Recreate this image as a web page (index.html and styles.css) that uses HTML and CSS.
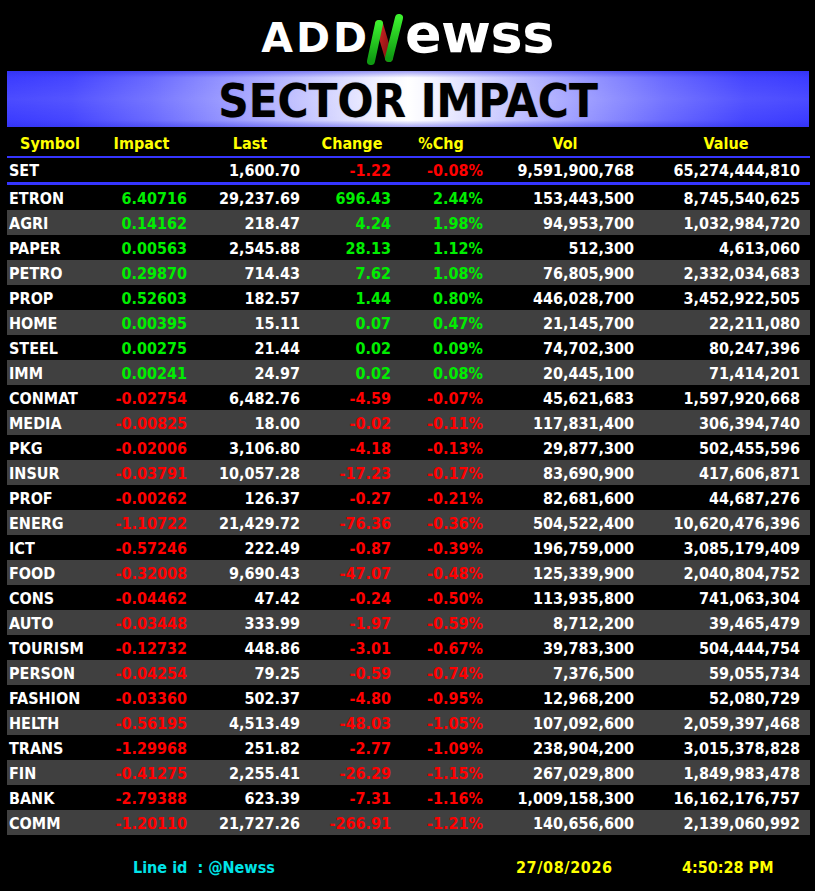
FILE: index.html
```html
<!DOCTYPE html>
<html>
<head>
<meta charset="utf-8">
<link rel="stylesheet" href="styles.css">
</head>
<body>
<div class="page">
  <div class="logo">
    <span class="logo-caps">ADD</span>
    <svg class="logo-n" width="42" height="54" viewBox="0 0 42 54">
      <defs>
        <linearGradient id="gl" x1="0" y1="0" x2="0" y2="1">
          <stop offset="0" stop-color="#3bef2e"/>
          <stop offset="1" stop-color="#0f9a12"/>
        </linearGradient>
        <linearGradient id="rd" x1="0" y1="0" x2="1" y2="1">
          <stop offset="0" stop-color="#d42424"/>
          <stop offset="1" stop-color="#7e1010"/>
        </linearGradient>
      </defs>
      <path d="M17 12 L27 46" stroke="url(#rd)" stroke-width="8" stroke-linecap="round" fill="none"/>
      <path d="M9 49 L17 12" stroke="url(#gl)" stroke-width="8" stroke-linecap="round" fill="none"/>
      <path d="M27 46 L37 6" stroke="url(#gl)" stroke-width="8" stroke-linecap="round" fill="none"/>
    </svg>
    <span class="logo-low">ewss</span>
  </div>

  <div class="banner">SECTOR IMPACT</div>

  <div class="grid hrow">
    <div>Symbol</div><div>Impact</div><div>Last</div><div>Change</div><div>%Chg</div><div>Vol</div><div>Value</div>
  </div>
  <div class="rule thin"></div>
  <div class="grid setrow">
    <div class="sym">SET</div><div class="num"></div><div class="num">1,600.70</div><div class="num neg">-1.22</div><div class="num neg">-0.08%</div><div class="num">9,591,900,768</div><div class="num">65,274,444,810</div>
  </div>
  <div class="rule thick"></div>

  <div class="rows">
    <div class="grid drow"><div class="sym">ETRON</div><div class="num pos">6.40716</div><div class="num">29,237.69</div><div class="num pos">696.43</div><div class="num pos">2.44%</div><div class="num">153,443,500</div><div class="num">8,745,540,625</div></div>
    <div class="grid drow"><div class="sym">AGRI</div><div class="num pos">0.14162</div><div class="num">218.47</div><div class="num pos">4.24</div><div class="num pos">1.98%</div><div class="num">94,953,700</div><div class="num">1,032,984,720</div></div>
    <div class="grid drow"><div class="sym">PAPER</div><div class="num pos">0.00563</div><div class="num">2,545.88</div><div class="num pos">28.13</div><div class="num pos">1.12%</div><div class="num">512,300</div><div class="num">4,613,060</div></div>
    <div class="grid drow"><div class="sym">PETRO</div><div class="num pos">0.29870</div><div class="num">714.43</div><div class="num pos">7.62</div><div class="num pos">1.08%</div><div class="num">76,805,900</div><div class="num">2,332,034,683</div></div>
    <div class="grid drow"><div class="sym">PROP</div><div class="num pos">0.52603</div><div class="num">182.57</div><div class="num pos">1.44</div><div class="num pos">0.80%</div><div class="num">446,028,700</div><div class="num">3,452,922,505</div></div>
    <div class="grid drow"><div class="sym">HOME</div><div class="num pos">0.00395</div><div class="num">15.11</div><div class="num pos">0.07</div><div class="num pos">0.47%</div><div class="num">21,145,700</div><div class="num">22,211,080</div></div>
    <div class="grid drow"><div class="sym">STEEL</div><div class="num pos">0.00275</div><div class="num">21.44</div><div class="num pos">0.02</div><div class="num pos">0.09%</div><div class="num">74,702,300</div><div class="num">80,247,396</div></div>
    <div class="grid drow"><div class="sym">IMM</div><div class="num pos">0.00241</div><div class="num">24.97</div><div class="num pos">0.02</div><div class="num pos">0.08%</div><div class="num">20,445,100</div><div class="num">71,414,201</div></div>
    <div class="grid drow"><div class="sym">CONMAT</div><div class="num neg">-0.02754</div><div class="num">6,482.76</div><div class="num neg">-4.59</div><div class="num neg">-0.07%</div><div class="num">45,621,683</div><div class="num">1,597,920,668</div></div>
    <div class="grid drow"><div class="sym">MEDIA</div><div class="num neg">-0.00825</div><div class="num">18.00</div><div class="num neg">-0.02</div><div class="num neg">-0.11%</div><div class="num">117,831,400</div><div class="num">306,394,740</div></div>
    <div class="grid drow"><div class="sym">PKG</div><div class="num neg">-0.02006</div><div class="num">3,106.80</div><div class="num neg">-4.18</div><div class="num neg">-0.13%</div><div class="num">29,877,300</div><div class="num">502,455,596</div></div>
    <div class="grid drow"><div class="sym">INSUR</div><div class="num neg">-0.03791</div><div class="num">10,057.28</div><div class="num neg">-17.23</div><div class="num neg">-0.17%</div><div class="num">83,690,900</div><div class="num">417,606,871</div></div>
    <div class="grid drow"><div class="sym">PROF</div><div class="num neg">-0.00262</div><div class="num">126.37</div><div class="num neg">-0.27</div><div class="num neg">-0.21%</div><div class="num">82,681,600</div><div class="num">44,687,276</div></div>
    <div class="grid drow"><div class="sym">ENERG</div><div class="num neg">-1.10722</div><div class="num">21,429.72</div><div class="num neg">-76.36</div><div class="num neg">-0.36%</div><div class="num">504,522,400</div><div class="num">10,620,476,396</div></div>
    <div class="grid drow"><div class="sym">ICT</div><div class="num neg">-0.57246</div><div class="num">222.49</div><div class="num neg">-0.87</div><div class="num neg">-0.39%</div><div class="num">196,759,000</div><div class="num">3,085,179,409</div></div>
    <div class="grid drow"><div class="sym">FOOD</div><div class="num neg">-0.32008</div><div class="num">9,690.43</div><div class="num neg">-47.07</div><div class="num neg">-0.48%</div><div class="num">125,339,900</div><div class="num">2,040,804,752</div></div>
    <div class="grid drow"><div class="sym">CONS</div><div class="num neg">-0.04462</div><div class="num">47.42</div><div class="num neg">-0.24</div><div class="num neg">-0.50%</div><div class="num">113,935,800</div><div class="num">741,063,304</div></div>
    <div class="grid drow"><div class="sym">AUTO</div><div class="num neg">-0.03448</div><div class="num">333.99</div><div class="num neg">-1.97</div><div class="num neg">-0.59%</div><div class="num">8,712,200</div><div class="num">39,465,479</div></div>
    <div class="grid drow"><div class="sym">TOURISM</div><div class="num neg">-0.12732</div><div class="num">448.86</div><div class="num neg">-3.01</div><div class="num neg">-0.67%</div><div class="num">39,783,300</div><div class="num">504,444,754</div></div>
    <div class="grid drow"><div class="sym">PERSON</div><div class="num neg">-0.04254</div><div class="num">79.25</div><div class="num neg">-0.59</div><div class="num neg">-0.74%</div><div class="num">7,376,500</div><div class="num">59,055,734</div></div>
    <div class="grid drow"><div class="sym">FASHION</div><div class="num neg">-0.03360</div><div class="num">502.37</div><div class="num neg">-4.80</div><div class="num neg">-0.95%</div><div class="num">12,968,200</div><div class="num">52,080,729</div></div>
    <div class="grid drow"><div class="sym">HELTH</div><div class="num neg">-0.56195</div><div class="num">4,513.49</div><div class="num neg">-48.03</div><div class="num neg">-1.05%</div><div class="num">107,092,600</div><div class="num">2,059,397,468</div></div>
    <div class="grid drow"><div class="sym">TRANS</div><div class="num neg">-1.29968</div><div class="num">251.82</div><div class="num neg">-2.77</div><div class="num neg">-1.09%</div><div class="num">238,904,200</div><div class="num">3,015,378,828</div></div>
    <div class="grid drow"><div class="sym">FIN</div><div class="num neg">-0.41275</div><div class="num">2,255.41</div><div class="num neg">-26.29</div><div class="num neg">-1.15%</div><div class="num">267,029,800</div><div class="num">1,849,983,478</div></div>
    <div class="grid drow"><div class="sym">BANK</div><div class="num neg">-2.79388</div><div class="num">623.39</div><div class="num neg">-7.31</div><div class="num neg">-1.16%</div><div class="num">1,009,158,300</div><div class="num">16,162,176,757</div></div>
    <div class="grid drow"><div class="sym">COMM</div><div class="num neg">-1.20110</div><div class="num">21,727.26</div><div class="num neg">-266.91</div><div class="num neg">-1.21%</div><div class="num">140,656,600</div><div class="num">2,139,060,992</div></div>
  </div>

  <div class="footer">
    <span class="line-id">Line id  : @Newss</span>
    <span class="date">27/08/2026</span>
    <span class="time">4:50:28 PM</span>
  </div>
</div>
</body>
</html>
```

FILE: styles.css
```css
html, body {
  margin: 0;
  padding: 0;
  background: #000;
}
.page {
  width: 815px;
  height: 891px;
  background: #000;
  font-family: "DejaVu Sans Condensed", "DejaVu Sans", sans-serif;
  font-stretch: condensed;
  font-weight: bold;
  font-size: 16px;
  color: #fff;
  overflow: hidden;
}
.logo {
  height: 71px;
  box-sizing: border-box;
  padding-top: 7px;
  display: flex;
  align-items: baseline;
  justify-content: center;
  font-family: "DejaVu Sans", sans-serif;
  font-stretch: normal;
  color: #fff;
}
.logo-caps {
  font-size: 41px;
  line-height: 41px;
  letter-spacing: 3px;
}
.logo-n {
  align-self: center;
  margin-left: -8px;
  margin-right: 1px;
}
.logo-low {
  font-size: 54px;
  line-height: 54px;
  letter-spacing: -0.5px;
}
.banner {
  margin: 0 6px 0 7px;
  height: 56px;
  box-sizing: border-box;
  padding-top: 3px;
  line-height: 53px;
  text-align: center;
  font-size: 47px;
  color: #000;
  background-color: #3f3fff;
  background-image:
    linear-gradient(180deg, rgba(40, 40, 230, 0.45) 0%, rgba(40, 40, 230, 0) 12%, rgba(255, 255, 255, 0.08) 50%, rgba(40, 40, 230, 0) 88%, rgba(40, 40, 230, 0.4) 100%),
    linear-gradient(90deg, #3c3cff 0%, #4646ff 8%, #6a6aff 18%, #9494ff 27%, #c8c8ff 38%, #f4f4ff 47%, #ffffff 50%, #f4f4ff 53%, #c8c8ff 62%, #9494ff 73%, #6a6aff 82%, #4646ff 92%, #3c3cff 100%);
  text-shadow: 0 0 1px rgba(60, 60, 60, 0.6);
}
.grid {
  display: grid;
  grid-template-columns: 86px 97px 120px 84px 94px 154px 168px;
  margin-left: 7px;
  width: 803px;
}
.hrow {
  height: 29px;
  box-sizing: border-box;
  padding-top: 4px;
  line-height: 25px;
  color: #ffff00;
  text-align: center;
}
.rule {
  margin-left: 7px;
  width: 803px;
  background: #3535ff;
}
.rule.thin { height: 2px; }
.rule.thick { height: 3px; }
.setrow {
  height: 24px;
  box-sizing: border-box;
  padding-top: 2px;
  line-height: 22px;
}
.drow {
  height: 25px;
  box-sizing: border-box;
  padding-top: 2px;
  line-height: 23px;
}
.drow:nth-child(even) {
  background: #404040;
}
.sym {
  padding-left: 2px;
  white-space: nowrap;
}
.num {
  text-align: right;
  white-space: nowrap;
}
.grid .num:nth-child(2) { padding-right: 3px; }
.grid .num:nth-child(3) { padding-right: 10px; }
.grid .num:nth-child(4) { padding-right: 3px; }
.grid .num:nth-child(5) { padding-right: 5px; }
.grid .num:nth-child(6) { padding-right: 8px; }
.grid .num:nth-child(7) { padding-right: 10px; }
.pos { color: #00ee00; }
.neg { color: #ff0000; }
.footer {
  display: flex;
  padding-left: 133px;
  padding-top: 23px;
  line-height: 20px;
  font-size: 16px;
}
.line-id {
  width: 383px;
  color: #00e4e8;
  white-space: pre;
}
.date {
  width: 166px;
  color: #ffff00;
  letter-spacing: 0.6px;
}
.time {
  color: #ffff00;
}
```
